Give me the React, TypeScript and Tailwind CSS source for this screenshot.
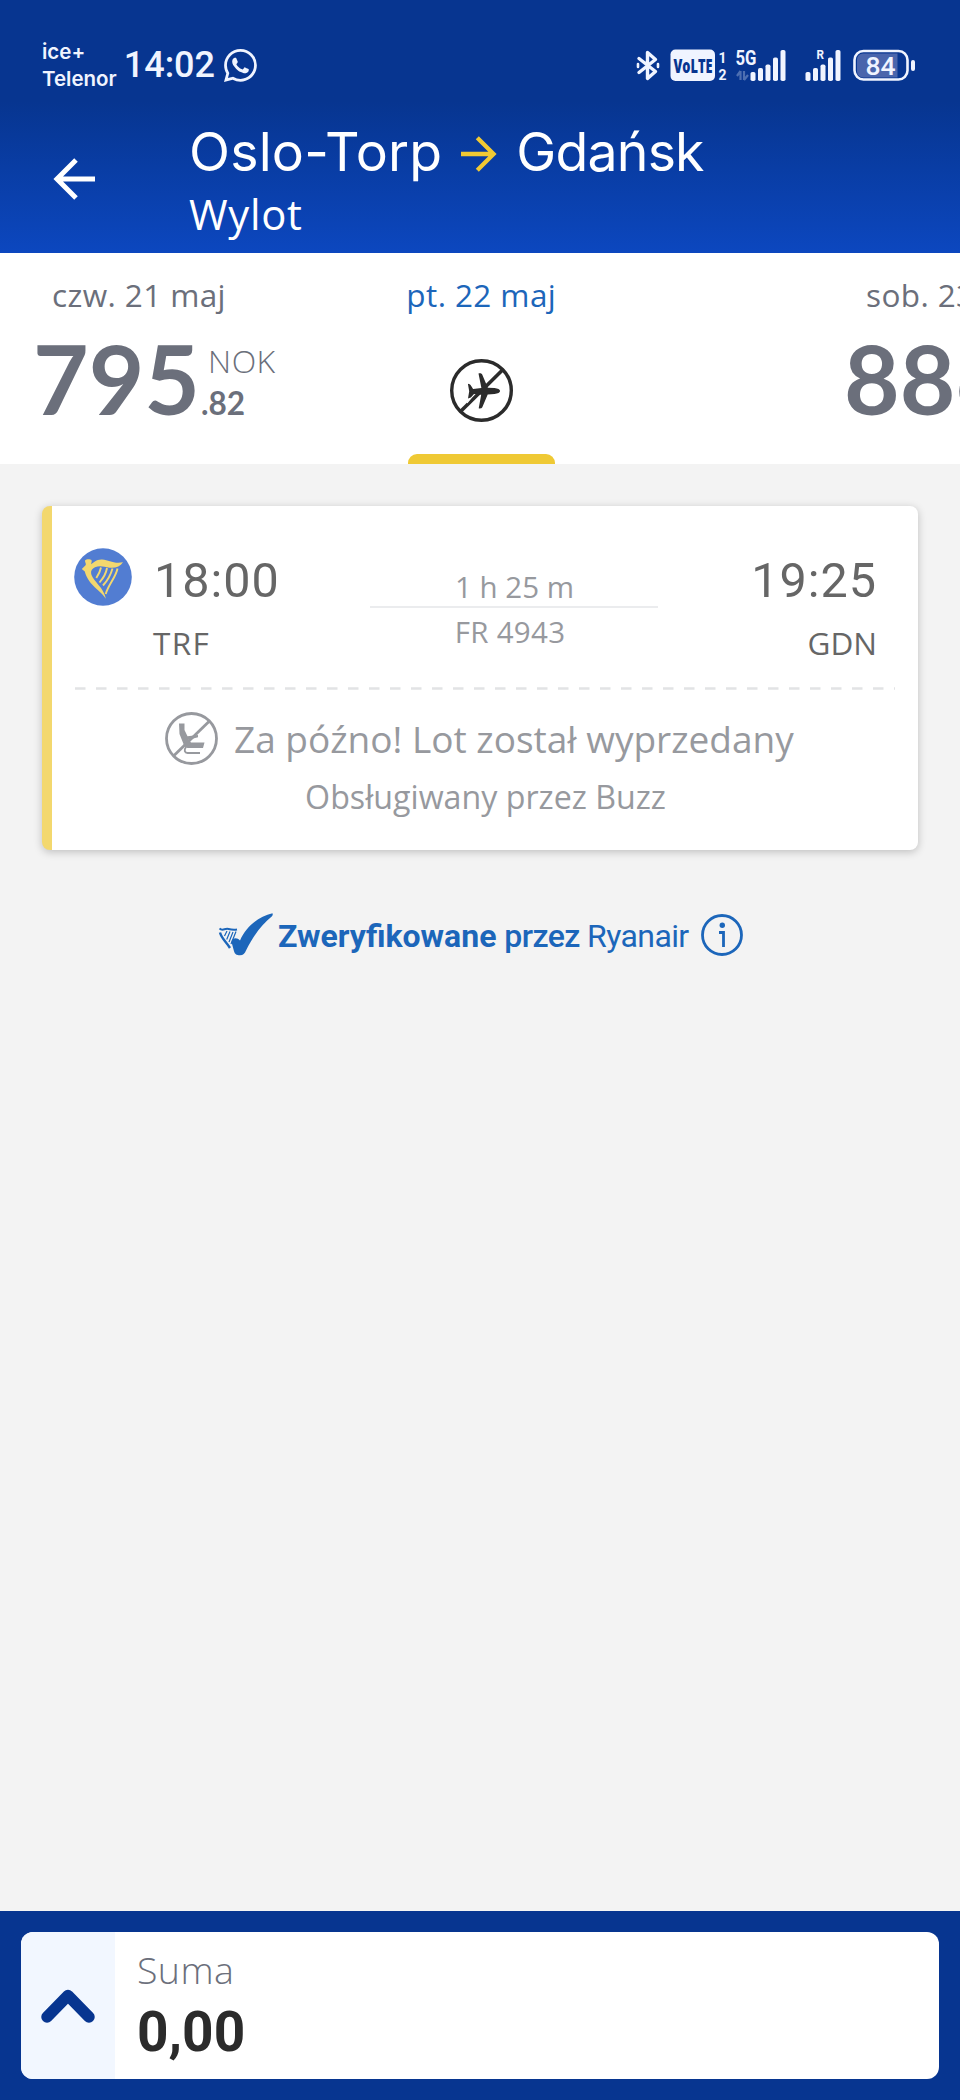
import type { ReactNode } from "react";
import { BsWhatsapp } from "react-icons/bs";

const openSans = "font-['Open_Sans',sans-serif]";
const roboto = "font-[Roboto,sans-serif]";

function BluetoothIcon() {
  return (
    <svg width="24" height="31" viewBox="0 0 24 31" fill="none" stroke="currentColor" strokeWidth="3.4" strokeLinecap="round" strokeLinejoin="round">
      <path d="M3 8.5 19.5 21.5 11.5 28.5V2.5L19.5 9.5 3 22.5" />
      <path d="M2 14v3M22 14v3" strokeWidth="2.6" />
    </svg>
  );
}

function VolteIcon() {
  return (
    <svg width="57" height="33" viewBox="0 0 57 33" fill="currentColor">
      <rect x="0.5" y="0.5" width="44.5" height="31.5" rx="5" />
      <text x="3.5" y="23.5" fill="#073590" fontFamily="Open Sans" fontWeight="800" fontSize="20" textLength="39" lengthAdjust="spacingAndGlyphs">VoLTE</text>
      <text x="48.5" y="13.5" fontFamily="Roboto" fontWeight="700" fontSize="15" textLength="8" lengthAdjust="spacingAndGlyphs">1</text>
      <text x="48.5" y="30.5" fontFamily="Roboto" fontWeight="700" fontSize="15" textLength="8" lengthAdjust="spacingAndGlyphs">2</text>
    </svg>
  );
}

function SignalBars({ x }: { x: number }) {
  const heights = [9, 13, 16.5, 23.5, 31];
  return (
    <g>
      {heights.map((h, i) => (
        <rect key={h} x={x + i * 7.5} y={32 - h} width="5" height={h} rx="1.8" />
      ))}
    </g>
  );
}

function Signal5G() {
  return (
    <svg width="51" height="33" viewBox="0 0 51 33" fill="currentColor">
      <text x="0.5" y="15.5" fontFamily="Roboto" fontWeight="700" fontSize="20.5" textLength="21" lengthAdjust="spacingAndGlyphs">5G</text>
      <path d="M5.5 22v9M5.5 22 2 27M9 31v-9M9 31l4-5" stroke="currentColor" strokeWidth="2.2" opacity="0.3" />
      <SignalBars x={15.5} />
    </svg>
  );
}

function SignalRoaming() {
  return (
    <svg width="37" height="33" viewBox="0 0 37 33" fill="currentColor">
      <text x="11.5" y="10" fontFamily="Roboto" fontWeight="700" fontSize="13.5" textLength="7.5" lengthAdjust="spacingAndGlyphs">R</text>
      <SignalBars x={0.5} />
    </svg>
  );
}

function Battery() {
  return (
    <svg width="62" height="33" viewBox="0 0 62 33" fill="none">
      <path d="M10 4.5h34.5v24H10a6 6 0 0 1-6-6v-12a6 6 0 0 1 6-6Z" fill="#4a65ac" />
      <rect x="1.5" y="2" width="53" height="28.5" rx="9" stroke="currentColor" strokeWidth="2.6" />
      <rect x="58" y="11" width="4" height="11" rx="2" fill="currentColor" />
      <text x="12.5" y="25.5" fill="currentColor" fontFamily="Roboto" fontWeight="500" fontSize="26.5">84</text>
    </svg>
  );
}

function Arrow({ flip, className }: { flip?: boolean; className: string }) {
  return (
    <svg viewBox="0 0 42 42" className={className} fill="none" stroke="currentColor" strokeWidth="5">
      <path d={flip ? "M42 21H4M23 2 4 21l19 19" : "M0 21h38M19 2l19 19-19 19"} />
    </svg>
  );
}

function NoFlightIcon() {
  return (
    <svg width="63" height="63" viewBox="0 0 63 63" fill="none" stroke="#2b2b2b">
      <circle cx="31.5" cy="31.5" r="29.8" strokeWidth="3.4" />
      <path d="M10 53 53 10.5" strokeWidth="3.6" />
      <path d="M17.5 37.5 23 36.5 17 44" stroke="#fff" strokeWidth="1.2" />
      <path
        d="M28.5 14.5c1.5-.4 3-.2 3.7 1l5.6 13.2 6.7.3c3.3.3 5.6 1.6 5.6 3s-2.3 2.7-5.6 3l-6.8.5-5.4 12.7c-.7 1.2-2 1.4-3.6 1l2.5-13.4-7.2-.8-3.2 3.5-2.8 1 1.2-7.3-1.3-7.4c1.4.1 2.3.7 3 1.7l2.2 3.4 8.3-1z"
        fill="#2b2b2b"
        stroke="none"
      />
    </svg>
  );
}

function HarpBadge() {
  return (
    <svg width="58" height="58" viewBox="0 0 58 58" className="shrink-0">
      <circle cx="29" cy="29" r="28.8" fill="#527dd2" />
      <path
        d="M11 12.5c1-1.5 5-1.8 6.5-.5.6 1.6-.3 3-.4 4.3 3-2.2 5.3-5.2 11-4.9 7 .4 11 4.6 20.9 2.9-2.8 4.2-8 6.2-13.5 5.4-5.5-.8-9.5-2.4-14.5-.4-3 1.3-4.5 3.6-3.8 6.7 1 4.2 6.2 9.2 9.8 14 2.5 3.6 4 6.7 4.8 10.7-2-3-4.6-5.8-8.6-9.3C16.5 35.6 12.5 30 10.8 23.5l-3-2.5 4-4c.3-1.6-.9-2.7-.8-4.5Z"
        fill="#f3d86e"
      />
      <path
        d="M27 19.5c-.8 4-2.6 7.3-4.7 10.5M33 20c-.8 5-3.6 10-7.5 14.5M38.5 20.5c-1.8 6.5-5 12-9.5 17M43.5 20.5C42 29 34.5 36.5 31.7 46"
        stroke="#f3d86e"
        strokeWidth="1.9"
        fill="none"
      />
    </svg>
  );
}

function NoSeatIcon() {
  return (
    <svg width="53" height="53" viewBox="0 0 53 53" fill="none" stroke="#97999e" className="shrink-0">
      <circle cx="26.5" cy="26.5" r="25" strokeWidth="2.8" />
      <path d="M9 43.5 44 9.5" strokeWidth="2.8" />
      <path d="M14 11.5h5.5V18l3 6.3 10.5-1.2v2.2l-9.5 2.5 2.5 2.7h13.5L38 36H23c-2.2 0-3.4-1.4-4.2-3.3L14.5 22Z" fill="#97999e" stroke="none" />
      <path d="M21 35c-2.4 3.2-1.2 6 1.5 6h12.5" strokeWidth="1.9" />
    </svg>
  );
}

function VerifiedIcon() {
  return (
    <svg width="56" height="43" viewBox="0 0 56 43" fill="none" className="shrink-0" stroke="currentColor">
      <path d="M54.5.3c.4 1.2.4 2-.5 3C44 11 35 23.5 28 37.5c-1.2 3-2.8 4.8-6 4.8-3.5 0-5-1-6-4L13.500 29c0-4 5.5-5.5 8.5-1.5C28 14 40 3.5 54.5.3Z" fill="currentColor" stroke="none" />
      <path d="M1.5 15.5c3.5 3 5-.5 9 .5 3 .8 5.5 1 8.5.5" strokeWidth="2" />
      <path d="M2 19.5c1.5 6 6 9 10 15.5" strokeWidth="2.4" />
      <path d="m9 18-2.5 5M12 18.5l-3.3 8M15 19l-4 10M18 18.5 13 31" strokeWidth="1.2" />
    </svg>
  );
}

function InfoIcon() {
  return (
    <svg width="42" height="42" viewBox="0 0 42 42" fill="none" stroke="currentColor">
      <circle cx="21" cy="21" r="19.5" strokeWidth="2.8" />
      <path d="M18 18.5h4.5V33" strokeWidth="2.8" />
      <circle cx="21.3" cy="11.3" r="2.7" fill="currentColor" stroke="none" />
    </svg>
  );
}

function StatusBar() {
  return (
    <div className="flex h-[126px] items-center pt-1 pr-[45px] pl-[42px] text-[#f0f4ff]">
      <div className="text-[20.5px] leading-[27.5px] font-semibold">
        <div>ice+</div>
        <div>Telenor</div>
      </div>
      <div className={`${roboto} ml-[7px] text-[36px] leading-10 font-medium`}>14:02</div>
      <BsWhatsapp className="ml-[9px] size-[33px]" />
      <div className="ml-auto flex items-center">
        <BluetoothIcon />
        <div className="ml-[10px]"><VolteIcon /></div>
        <div className="ml-2"><Signal5G /></div>
        <div className="ml-[19px]"><SignalRoaming /></div>
        <div className="ml-[11px]"><Battery /></div>
      </div>
    </div>
  );
}

function Header() {
  return (
    <header className="h-[253px] bg-linear-to-b from-[#073590] from-40% to-[#0c47bf] text-white">
      <StatusBar />
      <div className="flex">
        <Arrow flip className="mt-8 ml-[53px] size-[42px]" />
        <div className="mt-px ml-[94px]">
          <div className="flex items-center text-[53.6px] leading-[50px]">
            <span className="tracking-[0.2px]">Oslo-Torp</span>
            <Arrow className="mt-1 ml-[19px] size-[36px] text-[#f1c933]" />
            <span className="ml-[19px] tracking-[-0.8px]">Gdańsk</span>
          </div>
          <div className={`${openSans} mt-3 text-[41.8px] leading-[50px] tracking-[0.7px]`}>Wylot</div>
        </div>
      </div>
    </header>
  );
}

function DateLabel({ children, className }: { children: ReactNode; className: string }) {
  return (
    <div className={`${openSans} text-[31.5px] leading-10 tracking-[0.4px] whitespace-nowrap ${className}`}>{children}</div>
  );
}

function DateTabs() {
  return (
    <div className="flex h-[211px] overflow-hidden bg-white pt-[22px] text-[#6b6f7b]">
      <div className="w-[407.5px] shrink-0 pl-[33px]">
        <DateLabel className="pl-[19px]">czw. 21 maj</DateLabel>
        <div className="mt-[23px] flex">
          <span className="font-[Lato,sans-serif] text-[96px] leading-[80px] font-bold">795</span>
          <div className="mt-[2px] leading-[42px]">
            <div className={`${openSans} pl-2 text-[32px] font-light tracking-[0.5px]`}>NOK</div>
            <div className="pl-px font-[Lato,sans-serif] text-[31.5px] font-bold">.82</div>
          </div>
        </div>
      </div>
      <div className="flex w-[147.5px] shrink-0 flex-col items-center">
        <DateLabel className="text-[#1c66ba]">pt. 22 maj</DateLabel>
        <div className="mt-11"><NoFlightIcon /></div>
        <div className="mt-auto h-[10.5px] w-full rounded-t-[9px] bg-[#efc934]" />
      </div>
      <div className="ml-[289px] shrink-0">
        <DateLabel className="pl-[22px]">sob. 23 maj</DateLabel>
        <div className="mt-[23px] font-[Lato,sans-serif] text-[96px] leading-[80px] font-bold">886</div>
      </div>
    </div>
  );
}

function FlightCard() {
  return (
    <div className="mx-[42px] mt-[42px] h-[344px] overflow-hidden rounded-lg border-l-[10.5px] border-[#f3d86e] bg-white shadow-[0_2px_8px_rgba(0,0,0,0.22)]">
      <div className="flex pl-[22px] text-[#666]">
        <div className="pt-[42px]"><HarpBadge /></div>
        <div className="ml-[21px] w-[217px] pt-[46px]">
          <div className={`${roboto} pl-px text-[48.5px] leading-[58px] tracking-[1px]`}>18:00</div>
          <div className={`${openSans} mt-[13px] text-[31.5px] leading-10 tracking-[1.4px]`}>TRF</div>
        </div>
        <div className={`${openSans} w-[288px] pt-[63px] text-center text-[29.5px] leading-9 text-[#97999e]`}>
          <div className="border-b-2 border-[#ebecee] pb-px pl-px">1 h 25 m</div>
          <div className="mt-[6px] pr-2 tracking-[0.3px]">FR 4943</div>
        </div>
        <div className="w-[219px] pt-[46px] text-right">
          <div className={`${roboto} text-[48.5px] leading-[58px] tracking-[1px]`}>19:25</div>
          <div className={`${openSans} mt-[13px] text-[31.5px] leading-10`}>GDN</div>
        </div>
      </div>
      <svg width="821" height="3" className="mt-[24px] ml-[23px]">
        <line x1="0" y1="1.5" x2="820" y2="1.5" stroke="#e2e3e5" strokeWidth="2.5" strokeDasharray="10.5 10.5" />
      </svg>
      <div className={`${openSans} text-[#97999e]`}>
        <div className="mt-[22px] ml-[113px] flex items-center text-[37px] leading-[53px] whitespace-nowrap">
          <NoSeatIcon />
          <span className="ml-4">Za późno! Lot został wyprzedany</span>
        </div>
        <div className="mt-3 pl-px text-center text-[32.2px] leading-10">Obsługiwany przez Buzz</div>
      </div>
    </div>
  );
}

function VerifiedLine() {
  return (
    <div className={`${roboto} mt-[62px] ml-[218px] flex items-center text-[32px] leading-[42px] text-[#1c66ba]`}>
      <VerifiedIcon />
      <span className="mt-[3px] ml-1 whitespace-nowrap">
        <b>Zweryfikowane</b> <span className="tracking-[-0.6px]"><span className="font-medium">przez</span> Ryanair</span>
      </span>
      <div className="ml-3"><InfoIcon /></div>
    </div>
  );
}

function SummaryBar() {
  return (
    <footer className="mt-auto h-[189px] bg-[#073590] p-[21px]">
      <div className="flex h-[147px] overflow-hidden rounded-xl bg-white">
        <div className="flex w-[94px] items-center justify-center bg-[#f2f7ff]">
          <svg width="54" height="34" viewBox="0 0 54 34" fill="none" stroke="#073590" strokeWidth="11.5" strokeLinecap="round" strokeLinejoin="round">
            <path d="M6 28 27 6.5 48 28" />
          </svg>
        </div>
        <div className="pt-[14px] pl-[22px]">
          <div className={`${openSans} text-[37.5px] leading-[48px] font-light tracking-[0.4px] text-[#6b6f7b]`}>Suma</div>
          <div className={`${roboto} mt-[8px] text-[55px] leading-[60px] font-bold text-[#2b2b2b]`}>0,00</div>
        </div>
      </div>
    </footer>
  );
}

export default function App() {
  return (
    <div className="flex h-[2100px] w-[960px] flex-col overflow-hidden bg-[#f3f3f3] font-[Inter,sans-serif]">
      <Header />
      <DateTabs />
      <FlightCard />
      <VerifiedLine />
      <SummaryBar />
    </div>
  );
}
